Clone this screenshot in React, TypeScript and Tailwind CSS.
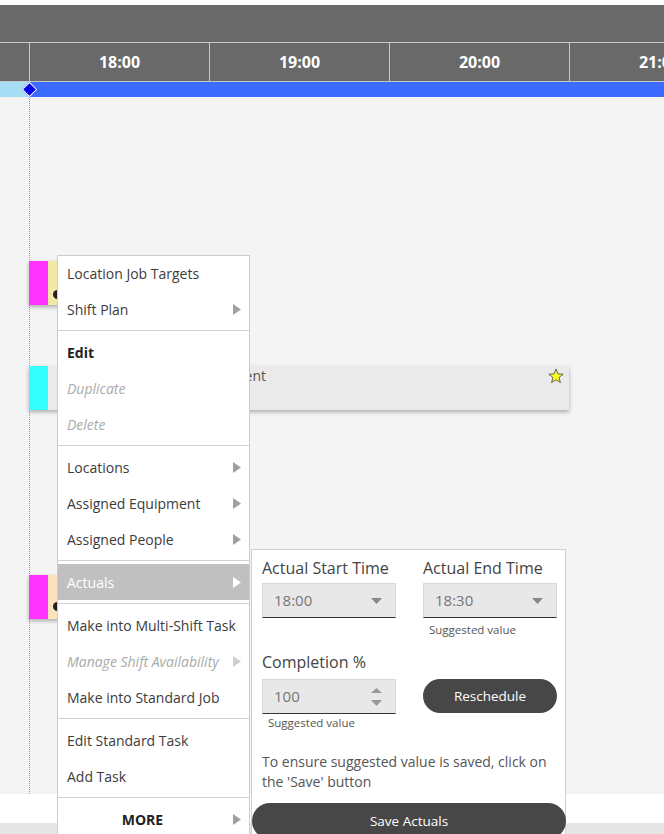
import React from "react";

type MenuEntry =
  | "sep"
  | {
      label: string;
      arrow?: boolean;
      bold?: boolean;
      disabled?: boolean;
      active?: boolean;
      center?: boolean;
      first?: boolean;
    };

const entries: MenuEntry[] = [
  { label: "Location Job Targets", first: true },
  { label: "Shift Plan", arrow: true },
  "sep",
  { label: "Edit", bold: true },
  { label: "Duplicate", disabled: true },
  { label: "Delete", disabled: true },
  "sep",
  { label: "Locations", arrow: true },
  { label: "Assigned Equipment", arrow: true },
  { label: "Assigned People", arrow: true },
  "sep",
  { label: "Actuals", arrow: true, active: true },
  "sep",
  { label: "Make into Multi-Shift Task" },
  { label: "Manage Shift Availability", arrow: true, disabled: true },
  { label: "Make into Standard Job" },
  "sep",
  { label: "Edit Standard Task" },
  { label: "Add Task" },
  "sep",
  { label: "MORE", arrow: true, bold: true, center: true },
];

function RightArrow({ color }: { color: string }) {
  return (
    <svg width="8" height="11" viewBox="0 0 8 11" className="shrink-0">
      <path d="M0 0 L8 5.5 L0 11 Z" fill={color} />
    </svg>
  );
}

function DownTri({ color }: { color: string }) {
  return (
    <svg width="11" height="6" viewBox="0 0 11 6">
      <path d="M0 0 H11 L5.5 6 Z" fill={color} />
    </svg>
  );
}

function UpTri({ color }: { color: string }) {
  return (
    <svg width="11" height="5" viewBox="0 0 11 5">
      <path d="M0 5 H11 L5.5 0 Z" fill={color} />
    </svg>
  );
}

function Star() {
  return (
    <svg width="16" height="16" viewBox="0 0 16 16">
      <polygon
        points="8,1 9.88,5.91 15.13,6.18 11.04,9.49 12.41,14.57 8,11.7 3.59,14.57 4.96,9.49 0.87,6.18 6.12,5.91"
        fill="#ffff22"
        stroke="#555"
        strokeWidth="0.9"
        strokeLinejoin="round"
      />
    </svg>
  );
}

function Menu() {
  return (
    <div className="absolute left-[57px] top-[255px] z-20 w-[193px] border border-[#cccccc] bg-white text-[14px] text-[#3c3c3c]">
      {entries.map((e, i) => {
        if (e === "sep") {
          return <div key={i} className="my-[3px] h-px bg-[#d2d2d2]" />;
        }
        const textCls = [
          e.bold ? "font-bold text-[#222]" : "",
          e.disabled ? "italic text-[#aaaaaa]" : "",
          e.active ? "text-white" : "",
          e.center ? "flex-1 pr-[15px] text-center" : "",
        ].join(" ");
        const arrowColor = e.active ? "#ffffff" : e.disabled ? "#cfcfcf" : "#a0a0a0";
        return (
          <div
            key={i}
            className={
              "flex items-center justify-between pl-[9px] pr-[8px] " +
              (e.first ? "h-[35px] " : "h-[36px] ") +
              (e.active ? "bg-[#c0c0c0]" : "")
            }
          >
            <span className={textCls}>{e.label}</span>
            {e.arrow && <RightArrow color={arrowColor} />}
          </div>
        );
      })}
    </div>
  );
}

function SelectBox({ value }: { value: string }) {
  return (
    <div className="flex h-[35px] items-center justify-between border border-[#d8d8d8] border-b-[#333] bg-[#e8e8e8] pl-[11px] pr-[13px] text-[15px] text-[#777]">
      <span>{value}</span>
      <DownTri color="#888" />
    </div>
  );
}

function ActualsPanel() {
  return (
    <div className="absolute left-[251px] top-[549px] z-20 h-[320px] w-[315px] border border-[#cfcfcf] bg-white pl-[10px] pt-[7px] text-[#444]">
      <div className="grid grid-cols-[134px_134px] gap-x-[27px]">
        <div>
          <div className="text-[16px] leading-[22px]">Actual Start Time</div>
          <div className="mt-[4px]">
            <SelectBox value="18:00" />
          </div>
        </div>
        <div>
          <div className="text-[16px] leading-[22px]">Actual End Time</div>
          <div className="mt-[4px]">
            <SelectBox value="18:30" />
          </div>
          <div className="mt-[4px] pl-[6px] text-[11.5px] leading-[16px] text-[#555]">
            Suggested value
          </div>
        </div>
      </div>
      <div className="mt-[13px] grid grid-cols-[134px_134px] gap-x-[27px]">
        <div>
          <div className="text-[16px] leading-[22px]">Completion %</div>
          <div className="relative mt-[6px] flex h-[35px] items-center border border-[#d8d8d8] border-b-[#333] bg-[#e8e8e8] pl-[11px] text-[15px] text-[#777]">
            <span>100</span>
            <div className="absolute right-[13px] top-[8px] flex flex-col gap-[7px]">
              <UpTri color="#999" />
              <DownTri color="#999" />
            </div>
          </div>
          <div className="mt-[1px] pl-[6px] text-[11.5px] leading-[16px] text-[#555]">
            Suggested value
          </div>
        </div>
        <div>
          <div className="mt-[28px] flex h-[34px] items-center justify-center rounded-full bg-[#474747] text-[13.5px] text-white">
            Reschedule
          </div>
        </div>
      </div>
      <p className="mt-[21px] w-[296px] text-[14px] leading-[20px] text-[#555]">
        To ensure suggested value is saved, click on the 'Save' button
      </p>
      <div className="-ml-[10px] mt-[11px] flex h-[36px] w-[314px] items-center justify-center rounded-full bg-[#474747] text-[13.5px] text-white">
        Save Actuals
      </div>
    </div>
  );
}

export default function App() {
  return (
    <div className="relative h-[834px] w-[664px] overflow-hidden bg-white font-['Open_Sans','Noto_Sans',sans-serif]">
      <div className="h-[5px] bg-white" />
      <div className="h-[37px] bg-[#696969]" />
      <div className="flex h-[40px] overflow-hidden border-y border-[#c8c8c8] bg-[#696969] text-[16px] font-bold text-white">
        <div className="w-[29px] shrink-0" />
        {["18:00", "19:00", "20:00", "21:00"].map((t) => (
          <div
            key={t}
            className="flex w-[180px] shrink-0 items-center justify-center border-l border-[#c8c8c8]"
          >
            {t}
          </div>
        ))}
      </div>
      <div className="relative flex h-[15px]">
        <div className="w-[29px] bg-[#a6dcf4]" />
        <div className="flex-1 bg-[#3b6cff]" />
        <div className="absolute left-[24px] top-[2px] z-10 h-[11px] w-[11px] rotate-45 border-[1.5px] border-white bg-[#0000e6]" />
      </div>
      <div className="relative h-[697px] bg-[#f4f4f4]">
        <div className="absolute bottom-0 left-[29px] top-0 border-l border-dotted border-[#9a9a9a]" />
        {/* card 1 */}
        <div className="absolute left-[29px] top-[164px] flex h-[44px] w-[200px] shadow-[0_2px_4px_rgba(0,0,0,0.3)]">
          <div className="w-[19px] bg-[#ff33ff]" />
          <div className="relative flex-1 bg-[#f3e8a4]">
            <div className="absolute left-[5px] top-[29px] h-[9px] w-[9px] rounded-full bg-[#222]" />
          </div>
        </div>
        {/* card 2 */}
        <div className="absolute left-[29px] top-[269px] flex h-[44px] w-[540px] shadow-[0_2px_4px_rgba(0,0,0,0.3)]">
          <div className="w-[19px] bg-[#33ffff]" />
          <div className="flex flex-1 items-start justify-between bg-[#eaeaea]">
            <div className="w-[218px] text-right text-[14px] leading-[20px] text-[#555]">
              Equipment
            </div>
            <div className="mr-[5px] mt-[2px]">
              <Star />
            </div>
          </div>
        </div>
        {/* card 3 */}
        <div className="absolute left-[29px] top-[478px] flex h-[44px] w-[200px] shadow-[0_2px_4px_rgba(0,0,0,0.3)]">
          <div className="w-[19px] bg-[#ff33ff]" />
          <div className="relative flex-1 bg-[#fde3bd]">
            <div className="absolute left-[5px] top-[27px] h-[9px] w-[9px] rounded-full bg-[#222]" />
          </div>
        </div>
      </div>
      <div className="h-[29px] bg-white" />
      <div className="h-[11px] bg-[#e6e6e6]" />
      <Menu />
      <ActualsPanel />
    </div>
  );
}
